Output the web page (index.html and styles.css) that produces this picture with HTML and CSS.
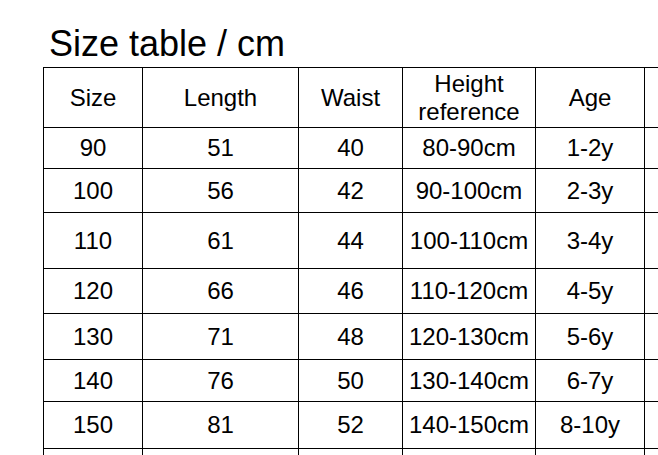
FILE: index.html
```html
<!DOCTYPE html>
<html lang="en">
<head>
<meta charset="utf-8">
<title>Size table</title>
<link rel="stylesheet" href="styles.css">
</head>
<body>
<div class="page">
  <h1 class="title">Size table / cm</h1>
  <table class="sizes">
    <colgroup>
      <col class="c1"><col class="c2"><col class="c3"><col class="c4"><col class="c5"><col class="c6">
    </colgroup>
    <tr class="r-head"><td>Size</td><td>Length</td><td>Waist</td><td>Height<br>reference</td><td>Age</td><td></td></tr>
    <tr class="r1"><td>90</td><td>51</td><td>40</td><td>80-90cm</td><td>1-2y</td><td></td></tr>
    <tr class="r2"><td>100</td><td>56</td><td>42</td><td>90-100cm</td><td>2-3y</td><td></td></tr>
    <tr class="r3"><td>110</td><td>61</td><td>44</td><td>100-110cm</td><td>3-4y</td><td></td></tr>
    <tr class="r4"><td>120</td><td>66</td><td>46</td><td>110-120cm</td><td>4-5y</td><td></td></tr>
    <tr class="r5"><td>130</td><td>71</td><td>48</td><td>120-130cm</td><td>5-6y</td><td></td></tr>
    <tr class="r6"><td>140</td><td>76</td><td>50</td><td>130-140cm</td><td>6-7y</td><td></td></tr>
    <tr class="r7"><td>150</td><td>81</td><td>52</td><td>140-150cm</td><td>8-10y</td><td></td></tr>
    <tr class="r8"><td></td><td></td><td></td><td></td><td></td><td></td></tr>
  </table>
</div>
</body>
</html>
```
FILE: styles.css
```css
html, body {
  margin: 0;
  padding: 0;
  background: #ffffff;
  overflow: hidden;
  width: 658px;
  height: 455px;
}
.page {
  display: flex;
  flex-direction: column;
  padding: 24px 0 0 43px;
  font-family: "Liberation Sans", Arial, sans-serif;
  color: #000;
}
.title {
  margin: 0 0 3px 6px;
  font-size: 36px;
  line-height: 40px;
  font-weight: normal;
  white-space: nowrap;
}
.sizes {
  border-collapse: collapse;
  table-layout: fixed;
  width: 616px;
  flex: none;
}
.sizes td {
  border: 1px solid #000;
  padding: 0;
  text-align: center;
  vertical-align: middle;
  font-size: 24px;
  line-height: 28px;
  white-space: nowrap;
}
.c1 { width: 99px; }
.c2 { width: 156px; }
.c3 { width: 104px; }
.c4 { width: 133px; }
.c5 { width: 109px; }
.c6 { width: 15px; }
.r-head { height: 60px; }
.r1 { height: 41px; }
.r2 { height: 44px; }
.r3 { height: 56px; }
.r4 { height: 45px; }
.r5 { height: 46px; }
.r6 { height: 42px; }
.r7 { height: 47px; }
.r8 { height: 7px; }
```
